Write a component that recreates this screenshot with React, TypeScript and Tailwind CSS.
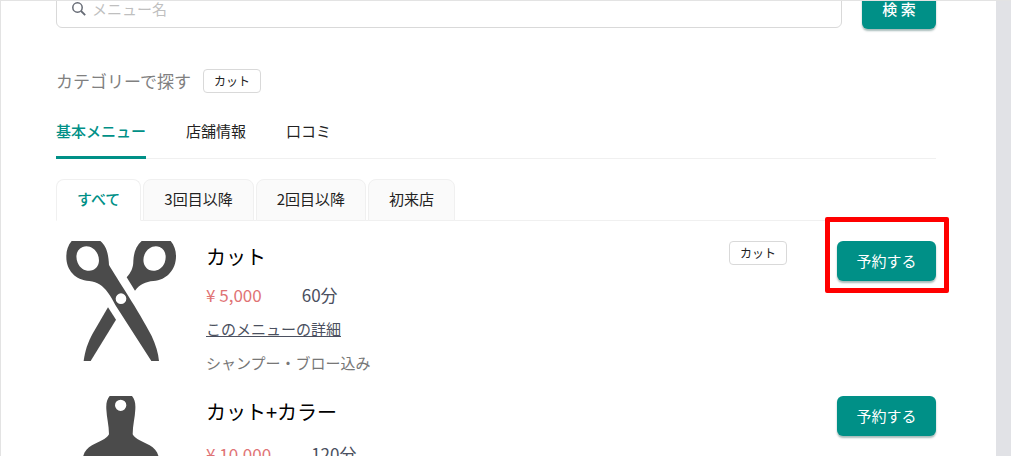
import { useState } from "react";

type MenuItem = {
  name: string;
  price: string;
  minutes: number;
  tag?: string;
  note?: string;
  icon: () => React.JSX.Element;
  highlighted?: boolean;
};

function ScissorsIcon() {
  return (
    <svg viewBox="33 33 360 360" className="size-[120px]" fill="#4b4b4b" aria-hidden="true">
      <path
        fillRule="evenodd"
        d="M65 33H151C167 46 175 65 177 105C200 145 265 240 305 318C317 344 325 370 327 393H304L196 225C189 211 182 199 174 188C158 166 143 156 118 153C75 151 48 119 49 79C49 61 54 46 65 33ZM98 51C80 58 75 79 83 98C91 118 112 127 129 120C147 112 151 91 143 73C135 54 115 44 98 51ZM213 190a16 16 0 1 0 0 32a16 16 0 1 0 0-32Z"
      />
      <path
        fillRule="evenodd"
        d="M275 33H362C373 46 378 61 378 79C378 119 350 151 310 153C287 155 269 163 255 182L230 142C243 128 250 113 250 93C251 67 259 46 275 33ZM329 51C312 44 292 54 284 73C276 91 281 112 298 120C315 127 336 118 344 98C351 79 346 58 329 51Z"
      />
      <path d="M174 232L198 269L122 393H101C105 363 113 338 129 309Z" />
    </svg>
  );
}

function BrushIcon() {
  return (
    <svg viewBox="33 48 360 360" className="size-[120px]" fill="#4b4b4b" aria-hidden="true">
      <path
        fillRule="evenodd"
        d="M179 48H246C254 57 257 69 256 88C255 113 248 136 248 163C255 178 280 185 299 196C315 206 326 218 327 240V280H98V240C99 218 110 206 126 196C145 185 170 178 177 163C177 136 170 113 169 88C168 69 171 57 179 48ZM212 59a17 17 0 1 0 0 34a17 17 0 1 0 0-34Z"
      />
      <path d="M98 292H327L315 408H110Z" />
    </svg>
  );
}

function SearchIcon() {
  return (
    <svg viewBox="0 0 14 14" className="size-[14px] shrink-0" fill="none" stroke="#666b75" aria-hidden="true">
      <circle cx="5.5" cy="5.5" r="4.7" strokeWidth="1.5" />
      <path d="M9 9L13.2 13.2" strokeWidth="1.8" />
    </svg>
  );
}

function Tag({ children }: { children: string }) {
  return (
    <span className="flex h-6 items-center rounded border border-[#d9d9d9] px-2.5 text-[12px] text-[#222]">
      {children}
    </span>
  );
}

const pages = ["基本メニュー", "店舗情報", "口コミ"];
const visits = ["すべて", "3回目以降", "2回目以降", "初来店"];
const items: MenuItem[] = [
  {
    name: "カット",
    price: "5,000",
    minutes: 60,
    tag: "カット",
    note: "シャンプー・ブロー込み",
    icon: ScissorsIcon,
    highlighted: true,
  },
  { name: "カット+カラー", price: "10,000", minutes: 120, icon: BrushIcon },
];

function MenuRow({ item }: { item: MenuItem }) {
  const Icon = item.icon;
  return (
    <li className="flex items-start gap-5">
      <div className="flex w-[130px] shrink-0 justify-center">
        <Icon />
      </div>
      <div className={item.note ? "flex flex-1 flex-col gap-2.5" : "flex flex-1 flex-col gap-3.5"}>
        <h2 className="text-[20px] leading-8 text-black">{item.name}</h2>
        <p className="flex gap-10 text-[17px] leading-6 text-[#4b5060]">
          <span className="text-[#df7375]">¥ {item.price}</span>
          <span>{item.minutes}分</span>
        </p>
        <a href="#detail" className="w-fit leading-6 text-[#4b5060] underline">
          このメニューの詳細
        </a>
        {item.note && <p className="leading-6 text-[#777]">{item.note}</p>}
      </div>
      {item.tag && <Tag>{item.tag}</Tag>}
      <div className="relative ml-[30px]">
        <button
          type="button"
          className="h-10 w-[99px] rounded-md bg-[#009087] text-white shadow-[0_2px_2px_rgba(0,60,55,0.35)]"
        >
          予約する
        </button>
        {item.highlighted && (
          <div className="pointer-events-none absolute -top-6 -right-[13px] -bottom-3 -left-3 rounded-xs border-5 border-[#ff0000]" />
        )}
      </div>
    </li>
  );
}

export default function App() {
  const [page, setPage] = useState(pages[0]);
  const [visit, setVisit] = useState(visits[0]);

  return (
    <div className="flex h-screen overflow-hidden border-t border-l border-[#e3e3e3] bg-white font-['Noto_Sans_CJK_JP',sans-serif] text-[15px] text-[#222]">
      <main className="min-w-0 flex-1 pr-[60px] pl-[55px]">
        <form className="-mt-3 flex items-center gap-5" onSubmit={(e) => e.preventDefault()}>
          <label className="flex h-[38px] flex-1 items-center gap-1.5 rounded-md border border-[#d9d9d9] px-[15px]">
            <SearchIcon />
            <input
              type="text"
              aria-label="メニュー名"
              placeholder="メニュー名"
              className="min-w-0 flex-1 outline-none placeholder:text-[#bfbfbf]"
            />
          </label>
          <button
            type="submit"
            className="h-10 w-[74px] rounded-md bg-[#009087] font-medium text-white shadow-[0_2px_2px_rgba(0,60,55,0.35)]"
          >
            検 索
          </button>
        </form>

        <div className="mt-10 flex h-6 items-center gap-3">
          <span className="text-[17px] text-[#808080]">カテゴリーで探す</span>
          <Tag>カット</Tag>
        </div>

        <nav className="mt-3 flex gap-10 border-b border-[#f0f0f0]">
          {pages.map((name) => (
            <button
              key={name}
              type="button"
              onClick={() => setPage(name)}
              className={
                name === page
                  ? "-mb-px border-b-3 border-[#009087] pt-3.5 pb-[13px] leading-6 font-medium text-[#009087]"
                  : "-mb-px border-b-3 border-transparent pt-3.5 pb-[13px] leading-6"
              }
            >
              {name}
            </button>
          ))}
        </nav>

        <div className="mt-5 flex gap-0.5 border-b border-[#f0f0f0]" role="tablist">
          {visits.map((name) => (
            <button
              key={name}
              type="button"
              role="tab"
              aria-selected={name === visit}
              onClick={() => setVisit(name)}
              className={
                name === visit
                  ? "-mb-px h-[42px] rounded-t-lg border border-[#f0f0f0] border-b-white bg-white px-5 pb-0.5 font-medium text-[#009087]"
                  : "-mb-px h-[42px] rounded-t-lg border border-[#f0f0f0] bg-[#fafafa] px-5 pb-0.5"
              }
            >
              {name}
            </button>
          ))}
        </div>

        <ul className="mt-5 flex flex-col gap-[21px]">
          {items.map((item) => (
            <MenuRow key={item.name} item={item} />
          ))}
        </ul>
      </main>
      <div className="w-[15px] shrink-0 bg-[#e1e2e6]" />
    </div>
  );
}
